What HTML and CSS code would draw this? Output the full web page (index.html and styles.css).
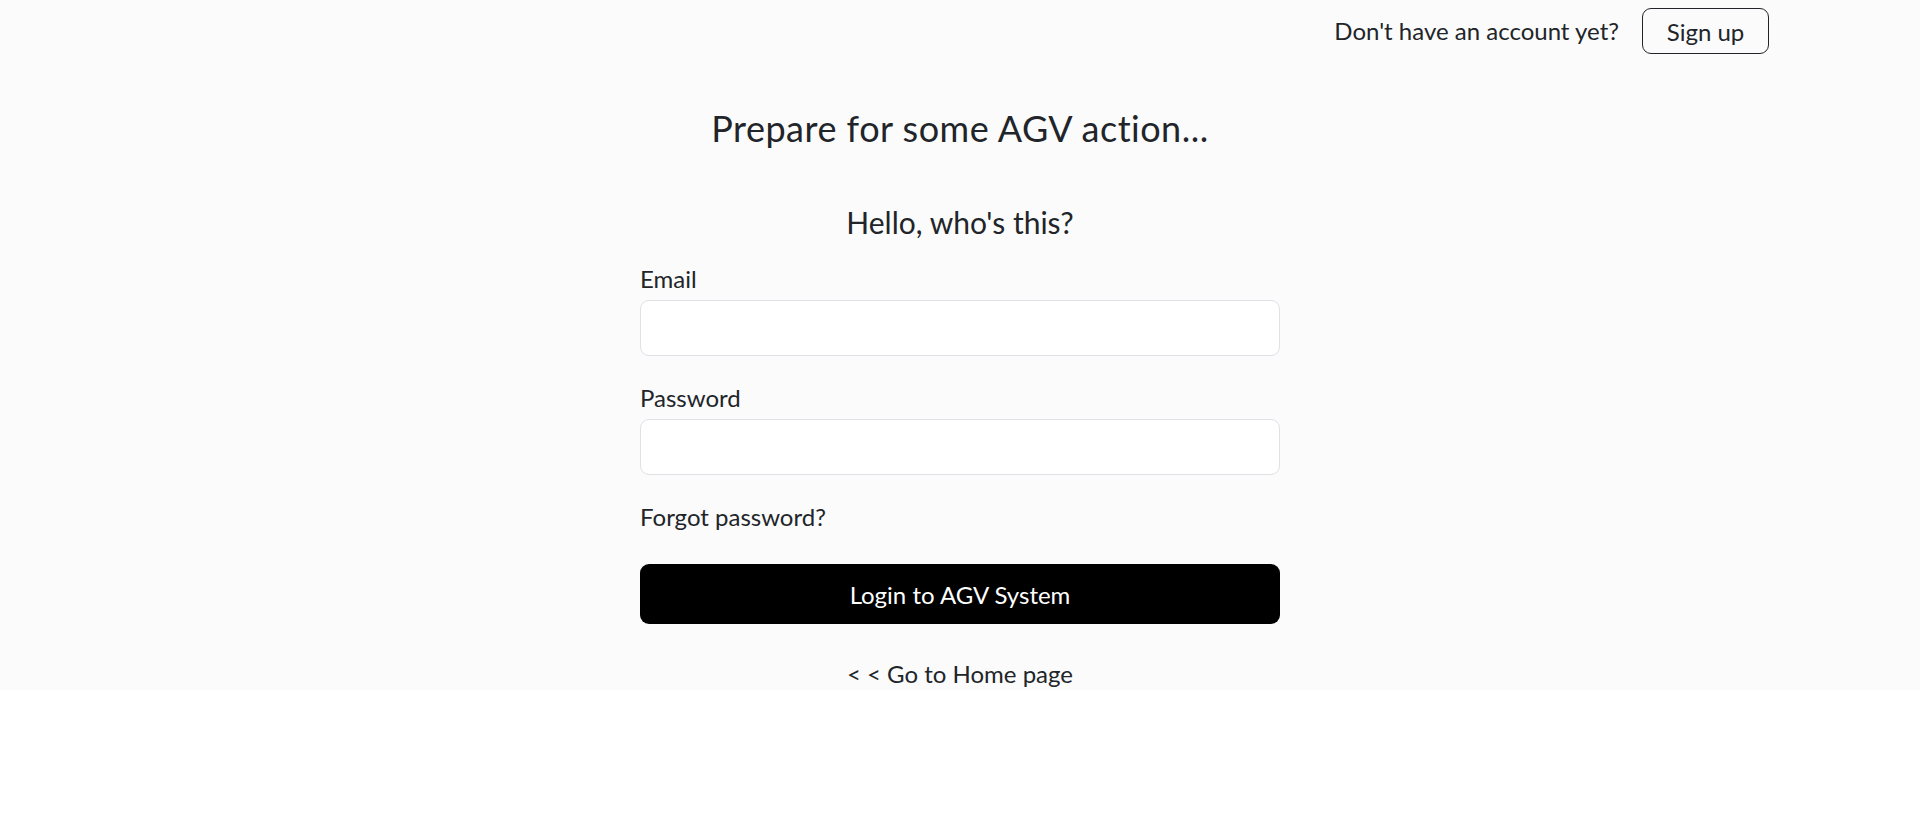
FILE: index.html
```html
<!DOCTYPE html>
<html lang="en">
<head>
<meta charset="utf-8">
<title>AGV System - Login</title>
<link rel="stylesheet" href="styles.css">
</head>
<body>
<div class="page">
  <header class="topbar">
    <span class="topbar-text">Don't have an account yet?</span>
    <a class="btn-outline" href="#">Sign up</a>
  </header>
  <main class="auth">
    <h1 class="title">Prepare for some AGV action...</h1>
    <form class="form">
      <h2 class="subtitle">Hello, who's this?</h2>
      <div class="field">
        <label class="label" for="email">Email</label>
        <input class="input" id="email" type="email">
      </div>
      <div class="field">
        <label class="label" for="password">Password</label>
        <input class="input" id="password" type="password">
      </div>
      <a class="forgot" href="#">Forgot password?</a>
      <button class="btn-primary" type="button">Login to AGV System</button>
      <a class="home" href="#">&lt; &lt; Go to Home page</a>
    </form>
  </main>
</div>
</body>
</html>
```

FILE: styles.css
```css
* { box-sizing: border-box; }

html, body {
  margin: 0;
  background: #ffffff;
}

body {
  font-family: "Lato", "Segoe UI", "Noto Sans", sans-serif;
  color: #212529;
}

.page {
  background: #fbfbfb;
}

.topbar {
  display: flex;
  justify-content: flex-end;
  align-items: center;
  gap: 23px;
  padding: 8px 151px 0 0;
}

.topbar-text {
  font-size: 24px;
  line-height: 36px;
}

.btn-outline {
  display: inline-flex;
  align-items: center;
  justify-content: center;
  width: 127px;
  height: 46px;
  border: 1px solid #212529;
  border-radius: 9px;
  font-size: 24px;
  color: #212529;
  text-decoration: none;
}

.auth {
  display: flex;
  flex-direction: column;
  align-items: center;
}

.title {
  margin: 52px 0 0;
  font-size: 36px;
  line-height: 44px;
  font-weight: 400;
  letter-spacing: 0.5px;
  text-align: center;
}

.form {
  width: 640px;
  display: flex;
  flex-direction: column;
  margin: 54px 0 0;
}

.subtitle {
  margin: 0 0 21px;
  font-size: 30px;
  line-height: 36px;
  font-weight: 400;
  text-align: center;
}

.field {
  display: flex;
  flex-direction: column;
  margin-bottom: 24px;
}

.label {
  font-size: 24px;
  line-height: 36px;
  margin-bottom: 3px;
}

.input {
  height: 56px;
  width: 100%;
  border: 1px solid #dee2e6;
  border-radius: 9px;
  background: #ffffff;
  font: inherit;
  font-size: 24px;
  padding: 0 18px;
}

.forgot {
  align-self: flex-start;
  font-size: 24px;
  line-height: 36px;
  color: #212529;
  text-decoration: none;
}

.btn-primary {
  margin-top: 29px;
  height: 60px;
  border: 0;
  border-radius: 9px;
  background: #000000;
  color: #ffffff;
  font-family: inherit;
  font-size: 24px;
}

.home {
  align-self: center;
  margin-top: 33px;
  font-size: 24px;
  line-height: 33px;
  color: #212529;
  text-decoration: none;
}
```
